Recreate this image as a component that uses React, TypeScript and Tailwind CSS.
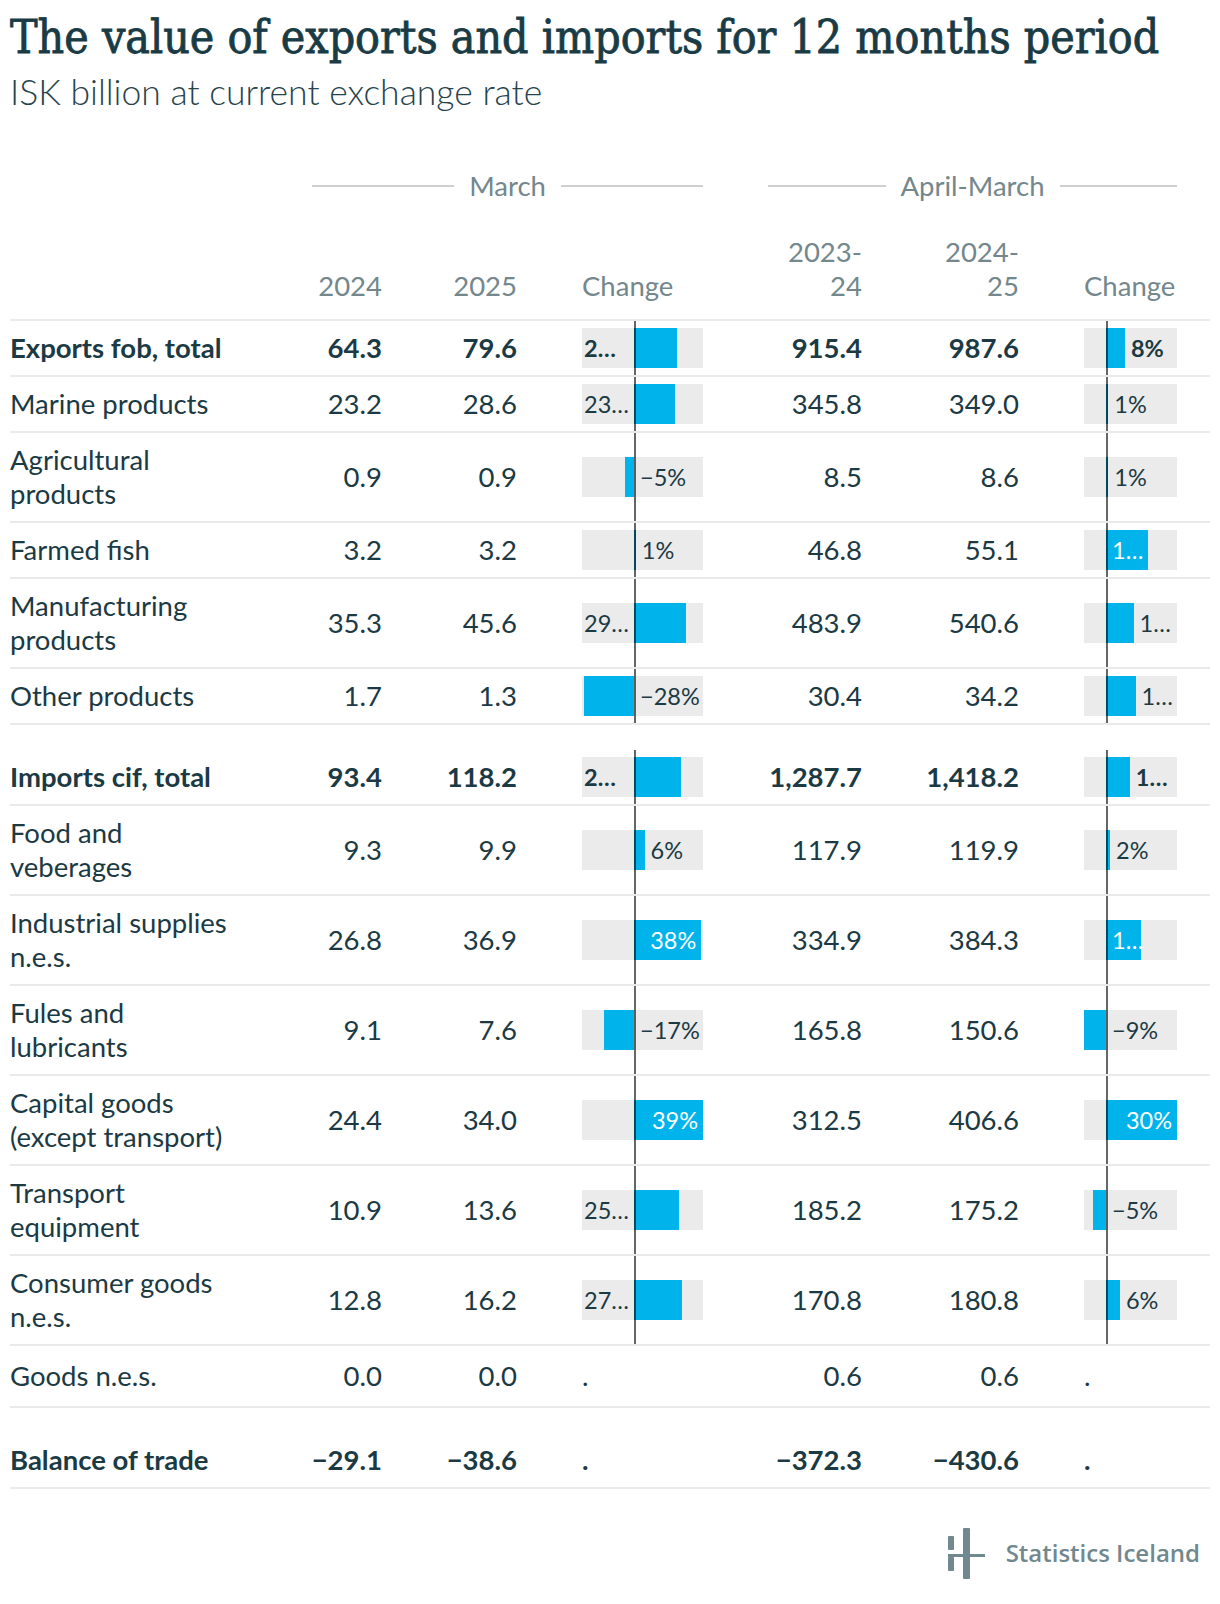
type Pos = "left" | "right" | "inside";
type Bar = { v: number; t: string; pos: Pos; al?: "l" };
type Row = {
  label: string[];
  bold?: boolean;
  v: string[];
  c1?: Bar;
  c2?: Bar;
  gap?: boolean;
  h: string;
};

const rows: Row[] = [
  { label: ["Exports fob, total"], bold: true, v: ["64.3", "79.6", "915.4", "987.6"], c1: { v: 24.5, t: "2…", pos: "left" }, c2: { v: 8, t: "8%", pos: "right" }, h: "h-[56px]" },
  { label: ["Marine products"], v: ["23.2", "28.6", "345.8", "349.0"], c1: { v: 23.3, t: "23…", pos: "left" }, c2: { v: 1, t: "1%", pos: "right" }, h: "h-[56px]" },
  { label: ["Agricultural", "products"], v: ["0.9", "0.9", "8.5", "8.6"], c1: { v: -5, t: "−5%", pos: "right" }, c2: { v: 1, t: "1%", pos: "right" }, h: "h-[90px]" },
  { label: ["Farmed fish"], v: ["3.2", "3.2", "46.8", "55.1"], c1: { v: 1, t: "1%", pos: "right" }, c2: { v: 17.7, t: "1…", pos: "inside", al: "l" }, h: "h-[56px]" },
  { label: ["Manufacturing", "products"], v: ["35.3", "45.6", "483.9", "540.6"], c1: { v: 29.2, t: "29…", pos: "left" }, c2: { v: 11.7, t: "1…", pos: "right" }, h: "h-[90px]" },
  { label: ["Other products"], v: ["1.7", "1.3", "30.4", "34.2"], c1: { v: -28.5, t: "−28%", pos: "right" }, c2: { v: 12.5, t: "1…", pos: "right" }, h: "h-[56px]" },
  { label: ["Imports cif, total"], bold: true, gap: true, v: ["93.4", "118.2", "1,287.7", "1,418.2"], c1: { v: 26.6, t: "2…", pos: "left" }, c2: { v: 10.1, t: "1…", pos: "right" }, h: "h-[56px]" },
  { label: ["Food and", "veberages"], v: ["9.3", "9.9", "117.9", "119.9"], c1: { v: 6, t: "6%", pos: "right" }, c2: { v: 1.7, t: "2%", pos: "right" }, h: "h-[90px]" },
  { label: ["Industrial supplies", "n.e.s."], v: ["26.8", "36.9", "334.9", "384.3"], c1: { v: 38, t: "38%", pos: "inside" }, c2: { v: 14.8, t: "1…", pos: "inside", al: "l" }, h: "h-[90px]" },
  { label: ["Fules and", "lubricants"], v: ["9.1", "7.6", "165.8", "150.6"], c1: { v: -17, t: "−17%", pos: "right" }, c2: { v: -9.2, t: "−9%", pos: "right" }, h: "h-[90px]" },
  { label: ["Capital goods", "(except transport)"], v: ["24.4", "34.0", "312.5", "406.6"], c1: { v: 39, t: "39%", pos: "inside" }, c2: { v: 30.1, t: "30%", pos: "inside" }, h: "h-[90px]" },
  { label: ["Transport", "equipment"], v: ["10.9", "13.6", "185.2", "175.2"], c1: { v: 25.5, t: "25…", pos: "left" }, c2: { v: -5.4, t: "−5%", pos: "right" }, h: "h-[90px]" },
  { label: ["Consumer goods", "n.e.s."], v: ["12.8", "16.2", "170.8", "180.8"], c1: { v: 27, t: "27…", pos: "left" }, c2: { v: 5.9, t: "6%", pos: "right" }, h: "h-[90px]" },
  { label: ["Goods n.e.s."], v: ["0.0", "0.0", "0.6", "0.6"], h: "h-[62px]" },
  { label: ["Balance of trade"], bold: true, gap: true, v: ["−29.1", "−38.6", "−372.3", "−430.6"], h: "h-[56px]" },
];

// scale per change column: total width, px left of the axis, px per percent
const scales = [
  { w: 121, axis: 52, k: 1.77 },
  { w: 93, axis: 22, k: 2.36 },
];

function ChangeCell({ bar, col, bold }: { bar?: Bar; col: number; bold?: boolean }) {
  const s = scales[col];
  const wrap = col === 0 ? "w-[121px]" : "w-[93px]";
  if (!bar) {
    return (
      <div className="flex justify-end">
        <div className={`${wrap} flex items-center`}>.</div>
      </div>
    );
  }
  const len = Math.abs(bar.v) * s.k;
  const left = bar.v >= 0 ? s.axis : s.axis - len;
  let label: React.ReactNode = null;
  const weight = bold ? "font-bold" : "";
  if (bar.pos === "left") {
    label = (
      <span className={`absolute top-0 left-[2px] leading-10 ${weight}`}>{bar.t}</span>
    );
  } else if (bar.pos === "right") {
    const x = bar.v >= 0 ? s.axis + len + 6 : s.axis + 6;
    label = (
      <span className={`absolute top-0 leading-10 ${weight}`} style={{ left: x }}>
        {bar.t}
      </span>
    );
  } else if (bar.al === "l") {
    label = (
      <span className={`absolute top-0 leading-10 text-white ${weight}`} style={{ left: s.axis + 6 }}>
        {bar.t}
      </span>
    );
  } else {
    label = (
      <span className={`absolute top-0 text-right leading-10 text-white ${weight}`} style={{ right: s.w - s.axis - len + 5 }}>
        {bar.t}
      </span>
    );
  }
  return (
    <div className="flex justify-end">
      <div className={`${wrap} relative flex items-center`}>
        <div className="relative h-10 w-full bg-[#ebebeb] whitespace-nowrap text-[23.5px]">
          <div className="absolute top-0 h-10 bg-[#00b4eb]" style={{ left, width: len }} />
          {label}
        </div>
        <div className="absolute top-0 bottom-0 w-[2px] bg-black/60" style={{ left: s.axis }} />
      </div>
    </div>
  );
}

function Logo() {
  return (
    <div className="flex items-center justify-end gap-[21px] pr-[10px]">
      <svg width="38" height="52" viewBox="0 0 38 52" fill="#71888e">
        <rect x="1" y="9" width="6" height="14" rx="1" />
        <rect x="1" y="30" width="6" height="14" rx="1" />
        <rect x="16" y="1" width="7" height="51" rx="1" />
        <rect x="1" y="27" width="37" height="3" />
      </svg>
      <span className="font-['Open_Sans',sans-serif] text-[24px] font-semibold text-[#71888e]">
        Statistics Iceland
      </span>
    </div>
  );
}

export default function App() {
  const grid = "grid grid-cols-[302px_70px_135px_186px_159px_157px_158px_1fr]";
  return (
    <main className="min-h-screen bg-white font-['Lato',sans-serif] text-[#1b3a44]">
      <div className="w-[1220px] h-[1604px] px-[10px]">
        <h1 className="pt-[9px] text-[46px] leading-[56px] text-[#193b45] [-webkit-text-stroke-width:0.8px] font-['DejaVu_Serif_Condensed','DejaVu_Serif',serif] font-stretch-condensed">
          The value of exports and imports for 12 months period
        </h1>
        <p className="mt-[6px] text-[35.5px] leading-[42px] font-light text-[#27434c]">
          ISK billion at current exchange rate
        </p>

        <div className={`${grid} mt-[56px] h-[34px] text-[27.5px] leading-[34px] text-[#73878d]`}>
          <div />
          <div className="col-span-3 flex items-center gap-[15px]">
            <div className="h-[2px] flex-1 bg-[#cfcfcf]" />
            <span>March</span>
            <div className="h-[2px] flex-1 bg-[#cfcfcf]" />
          </div>
          <div className="col-span-3 flex items-center gap-[15px] pl-[65px]">
            <div className="h-[2px] flex-1 bg-[#cfcfcf]" />
            <span>April-March</span>
            <div className="h-[2px] flex-1 bg-[#cfcfcf]" />
          </div>
        </div>

        <div className={`${grid} h-[118px] items-end pb-[16px] border-b-2 border-[#eaeaea] text-[27.5px] leading-[34px] text-[#73878d]`}>
          <div />
          <div className="text-right">2024</div>
          <div className="text-right">2025</div>
          <div className="flex justify-end">
            <div className="w-[121px]">Change</div>
          </div>
          <div className="text-right">
            2023-
            <br />
            24
          </div>
          <div className="text-right">
            2024-
            <br />
            25
          </div>
          <div className="flex justify-end">
            <div className="w-[93px]">Change</div>
          </div>
        </div>

        {rows.map((r, i) => (
          <div key={i} className={r.gap ? "pt-[25px]" : ""}>
            <div className={`${grid} ${r.h} border-b-2 border-[#eaeaea] text-[27.5px] leading-[34px] ${r.bold ? "font-bold" : ""}`}>
              <div className="flex flex-col justify-center">
                {r.label.map((l) => (
                  <div key={l}>{l}</div>
                ))}
              </div>
              <div className="flex items-center justify-end">{r.v[0]}</div>
              <div className="flex items-center justify-end">{r.v[1]}</div>
              <ChangeCell bar={r.c1} col={0} bold={r.bold} />
              <div className="flex items-center justify-end">{r.v[2]}</div>
              <div className="flex items-center justify-end">{r.v[3]}</div>
              <ChangeCell bar={r.c2} col={1} bold={r.bold} />
              <div />
            </div>
          </div>
        ))}

        <div className="mt-[38px]">
          <Logo />
        </div>
      </div>
    </main>
  );
}
